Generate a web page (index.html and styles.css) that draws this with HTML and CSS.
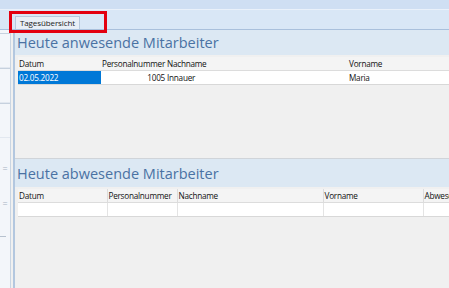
FILE: index.html
```html
<!DOCTYPE html>
<html lang="de">
<head>
    <meta charset="UTF-8">
    <title>Tagesübersicht</title>
    <link rel="stylesheet" href="styles.css">
</head>
<body>
    <div class="topbar"></div>
    <div class="tabstrip">
        <div class="tab">Tagesübersicht</div>
        <div class="marker"></div>
    </div>
    <div class="main">
        <div class="sidebar">
            <div class="side-box"></div>
            <div class="side-box"></div>
            <div class="side-box"></div>
            <div class="side-grip first">=</div>
            <div class="side-grip">=</div>
            <div class="side-line"></div>
        </div>
        <div class="content">
            <div class="section present">
                <h2 class="section-title">Heute anwesende Mitarbeiter</h2>
                <div class="grid-area">
                    <table class="grid">
                        <colgroup>
                            <col class="c-date1">
                            <col class="c-pnr1">
                            <col class="c-name1">
                            <col>
                        </colgroup>
                        <tr>
                            <th>Datum</th>
                            <th>Personalnummer</th>
                            <th>Nachname</th>
                            <th>Vorname</th>
                        </tr>
                        <tr>
                            <td class="selected">02.05.2022</td>
                            <td class="num">1005</td>
                            <td>Innauer</td>
                            <td>Maria</td>
                        </tr>
                    </table>
                </div>
            </div>
            <div class="section absent">
                <h2 class="section-title">Heute abwesende Mitarbeiter</h2>
                <div class="grid-area">
                    <table class="grid">
                        <colgroup>
                            <col class="c-date2">
                            <col class="c-pnr2">
                            <col class="c-name2">
                            <col class="c-first2">
                            <col>
                        </colgroup>
                        <tr>
                            <th>Datum</th>
                            <th>Personalnummer</th>
                            <th>Nachname</th>
                            <th>Vorname</th>
                            <th>Abwesenheit</th>
                        </tr>
                        <tr>
                            <td></td>
                            <td></td>
                            <td></td>
                            <td></td>
                            <td></td>
                        </tr>
                    </table>
                </div>
            </div>
        </div>
    </div>
</body>
</html>
```

FILE: styles.css
```css
html, body {
    margin: 0;
    height: 100%;
    overflow: hidden;
}
body {
    font-family: 'Open Sans', 'Noto Sans', sans-serif;
    background-color: #f0f0f0;
    display: flex;
    flex-direction: column;
}
.topbar {
    height: 9px;
    background-color: #cfdff3;
    border-bottom: 1px solid #eaf1fa;
}
.tabstrip {
    position: relative;
    height: 19px;
    background-color: #d9e7f6;
    border-bottom: 1px solid #a9c0dc;
    display: flex;
    align-items: flex-end;
    padding-left: 15px;
}
.tab {
    width: 63px;
    height: 12px;
    background-color: #e9eff7;
    border: 1px solid #b8c9dd;
    border-bottom: none;
    font-size: 8px;
    line-height: 12px;
    color: #222;
    text-align: center;
    letter-spacing: -0.1px;
}
.marker {
    position: absolute;
    left: 9px;
    top: 1px;
    width: 92px;
    height: 16px;
    border: 3px solid #e3000f;
}
.main {
    flex: 1;
    display: flex;
}
.sidebar {
    width: 10px;
    background-color: #f3f6fa;
    border-right: 1px solid #c9d5e3;
    padding-top: 3px;
    margin-right: 2px;
    display: flex;
    flex-direction: column;
}
.side-box {
    height: 33px;
    border-top: 1px solid #c6d1de;
    border-bottom: 1px solid #e2e8f0;
}
.side-grip {
    height: 35px;
    font-size: 9px;
    line-height: 35px;
    color: #a8b4c2;
    text-align: center;
}
.side-grip.first {
    margin-top: 13px;
}
.side-line {
    width: 6px;
    margin-top: 15px;
    border-top: 1px solid #b7c2cf;
}
.content {
    flex: 1;
    border-left: 2px solid #b3c7df;
    display: flex;
    flex-direction: column;
    min-width: 0;
}
.section {
    display: flex;
    flex-direction: column;
}
.present {
    height: 128px;
    border-bottom: 1px solid #d0d4d9;
}
.absent {
    flex: 1;
}
.section-title {
    margin: 0;
    height: 25px;
    padding-left: 2px;
    background-color: #dce8f3;
    color: #4a72a3;
    font-weight: 400;
    font-size: 14.5px;
    line-height: 25px;
    white-space: nowrap;
}
.absent .section-title {
    height: 28px;
    line-height: 30px;
}
.grid-area {
    flex: 1;
    padding-left: 3px;
    padding-top: 2px;
    overflow: hidden;
}
.grid {
    border-collapse: collapse;
    table-layout: fixed;
    width: 480px;
    font-size: 8.2px;
    letter-spacing: -0.25px;
    color: #111;
}
.grid th, .grid td {
    height: 13px;
    padding: 0 0 0 1px;
    text-align: left;
    font-weight: 400;
    white-space: nowrap;
    overflow: hidden;
    line-height: 13px;
}
.grid th {
    background-color: #f4f4f4;
    border-right: 1px solid #dcdcdc;
    border-bottom: 1px solid #dcdcdc;
}
.grid td {
    background-color: #ffffff;
    border-right: 1px solid #e4e4e4;
    border-bottom: 1px solid #d8d8d8;
}
.present .grid th, .present .grid td {
    border-right: none;
}
.grid td.selected {
    background-color: #0078d7;
    color: #ffffff;
}
.grid td.num {
    text-align: right;
    padding-right: 1px;
}
.c-date1 { width: 83px; }
.c-pnr1 { width: 65px; }
.c-name1 { width: 182px; }
.c-date2 { width: 89px; }
.c-pnr2 { width: 70px; }
.c-name2 { width: 146px; }
.c-first2 { width: 100px; }
```
